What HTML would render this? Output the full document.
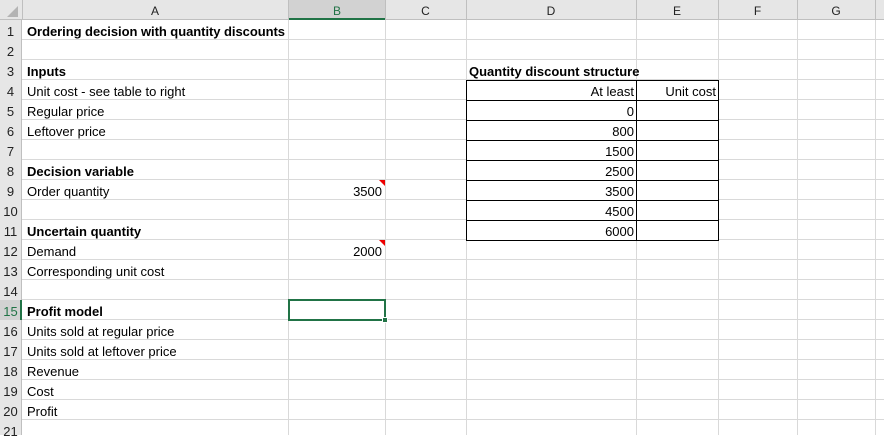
<!DOCTYPE html>
<html><head><meta charset="utf-8"><style>
*{margin:0;padding:0;box-sizing:border-box}
body{width:884px;height:435px;overflow:hidden;background:#fff;font-family:"Liberation Sans",Arial,sans-serif;font-size:13px;color:#000;position:relative}
.hdr{position:absolute;top:0;left:0;width:884px;height:20px;background:#e6e6e6;border-bottom:1px solid #bfbfbf}
.rh{position:absolute;left:0;top:20px;width:22px;height:415px;background:#e6e6e6;border-right:1px solid #bfbfbf}
.grid{position:absolute;left:22px;top:20px;width:862px;height:415px;background:repeating-linear-gradient(to bottom,transparent 0,transparent 19px,#d9d9d9 19px,#d9d9d9 20px)}
.v{position:absolute;top:20px;width:1px;height:415px;background:#d9d9d9}
.hv{position:absolute;top:0;width:1px;height:20px;background:#bfbfbf}
.cl{position:absolute;top:4px;font-size:12px;color:#222;text-align:center}
.rn{position:absolute;left:0;width:21px;text-align:center;font-size:13px;color:#222;height:20px;line-height:23px}
.t{position:absolute;height:20px;line-height:23px;white-space:nowrap}
.b{font-weight:bold}
.r{text-align:right}
.tb{position:absolute;border:1px solid #000}
</style></head><body>
<div class="hdr"></div>
<div style="position:absolute;left:289px;top:0;width:96px;height:20px;background:#d2d2d2;border-bottom:2px solid #217346"></div>
<svg style="position:absolute;left:5px;top:5px" width="14" height="13"><polygon points="13,1 13,12 2,12" fill="#b4b4b4"/></svg>
<div class="rh"></div>
<div style="position:absolute;left:0;top:300px;width:22px;height:20px;background:#d2d2d2;border-right:2px solid #217346"></div>
<div class="grid"></div>
<div class="v" style="left:288px"></div><div class="v" style="left:385px"></div><div class="v" style="left:466px"></div><div class="v" style="left:636px"></div><div class="v" style="left:718px"></div><div class="v" style="left:797px"></div><div class="v" style="left:875px"></div>
<div class="hv" style="left:22px"></div><div class="hv" style="left:288px"></div><div class="hv" style="left:385px"></div><div class="hv" style="left:466px"></div><div class="hv" style="left:636px"></div><div class="hv" style="left:718px"></div><div class="hv" style="left:797px"></div><div class="hv" style="left:875px"></div>
<div class="cl" style="left:22px;width:266px">A</div>
<div class="cl" style="left:289px;width:96px;color:#217346">B</div>
<div class="cl" style="left:385px;width:81px">C</div>
<div class="cl" style="left:466px;width:170px">D</div>
<div class="cl" style="left:636px;width:82px">E</div>
<div class="cl" style="left:718px;width:79px">F</div>
<div class="cl" style="left:797px;width:78px">G</div>
<div class="rn" style="top:20px">1</div><div class="rn" style="top:40px">2</div><div class="rn" style="top:60px">3</div><div class="rn" style="top:80px">4</div><div class="rn" style="top:100px">5</div><div class="rn" style="top:120px">6</div><div class="rn" style="top:140px">7</div><div class="rn" style="top:160px">8</div><div class="rn" style="top:180px">9</div><div class="rn" style="top:200px">10</div><div class="rn" style="top:220px">11</div><div class="rn" style="top:240px">12</div><div class="rn" style="top:260px">13</div><div class="rn" style="top:280px">14</div><div class="rn" style="top:300px;color:#217346">15</div><div class="rn" style="top:320px">16</div><div class="rn" style="top:340px">17</div><div class="rn" style="top:360px">18</div><div class="rn" style="top:380px">19</div><div class="rn" style="top:400px">20</div><div class="rn" style="top:420px">21</div>
<div class="t b" style="left:27px;top:20px;letter-spacing:-0.05px">Ordering decision with quantity discounts</div>
<div class="t b" style="left:27px;top:60px">Inputs</div>
<div class="t" style="left:27px;top:80px">Unit cost - see table to right</div>
<div class="t" style="left:27px;top:100px">Regular price</div>
<div class="t" style="left:27px;top:120px">Leftover price</div>
<div class="t b" style="left:27px;top:160px">Decision variable</div>
<div class="t" style="left:27px;top:180px">Order quantity</div>
<div class="t b" style="left:27px;top:220px">Uncertain quantity</div>
<div class="t" style="left:27px;top:240px">Demand</div>
<div class="t" style="left:27px;top:260px">Corresponding unit cost</div>
<div class="t b" style="left:27px;top:300px">Profit model</div>
<div class="t" style="left:27px;top:320px">Units sold at regular price</div>
<div class="t" style="left:27px;top:340px">Units sold at leftover price</div>
<div class="t" style="left:27px;top:360px">Revenue</div>
<div class="t" style="left:27px;top:380px">Cost</div>
<div class="t" style="left:27px;top:400px">Profit</div>
<div class="t r" style="left:290px;width:92px;top:180px">3500</div>
<div class="t r" style="left:290px;width:92px;top:240px">2000</div>
<svg style="position:absolute;left:379px;top:180px" width="6" height="6"><polygon points="0,0 6,0 6,6" fill="#e00"/></svg>
<svg style="position:absolute;left:379px;top:240px" width="6" height="6"><polygon points="0,0 6,0 6,6" fill="#e00"/></svg>
<div style="position:absolute;left:288px;top:299px;width:98px;height:22px;border:2px solid #217346"></div>
<div style="position:absolute;left:382px;top:317px;width:6px;height:6px;background:#217346;border:1px solid #fff"></div>
<div class="t b" style="left:469px;top:60px">Quantity discount structure</div>
<div style="position:absolute;left:466px;top:80px;width:253px;height:161px;background:#fff"></div>
<div class="tb" style="left:466px;top:80px;width:253px;height:161px"></div>
<div style="position:absolute;left:636px;top:80px;width:1px;height:161px;background:#000"></div>
<div style="position:absolute;left:466px;top:100px;width:253px;height:1px;background:#000"></div>
<div style="position:absolute;left:466px;top:120px;width:253px;height:1px;background:#000"></div>
<div style="position:absolute;left:466px;top:140px;width:253px;height:1px;background:#000"></div>
<div style="position:absolute;left:466px;top:160px;width:253px;height:1px;background:#000"></div>
<div style="position:absolute;left:466px;top:180px;width:253px;height:1px;background:#000"></div>
<div style="position:absolute;left:466px;top:200px;width:253px;height:1px;background:#000"></div>
<div style="position:absolute;left:466px;top:220px;width:253px;height:1px;background:#000"></div>
<div class="t r" style="left:470px;width:164px;top:80px">At least</div>
<div class="t r" style="left:640px;width:76px;top:80px">Unit cost</div>
<div class="t r" style="left:470px;width:164px;top:100px">0</div>
<div class="t r" style="left:470px;width:164px;top:120px">800</div>
<div class="t r" style="left:470px;width:164px;top:140px">1500</div>
<div class="t r" style="left:470px;width:164px;top:160px">2500</div>
<div class="t r" style="left:470px;width:164px;top:180px">3500</div>
<div class="t r" style="left:470px;width:164px;top:200px">4500</div>
<div class="t r" style="left:470px;width:164px;top:220px">6000</div>
</body></html>
